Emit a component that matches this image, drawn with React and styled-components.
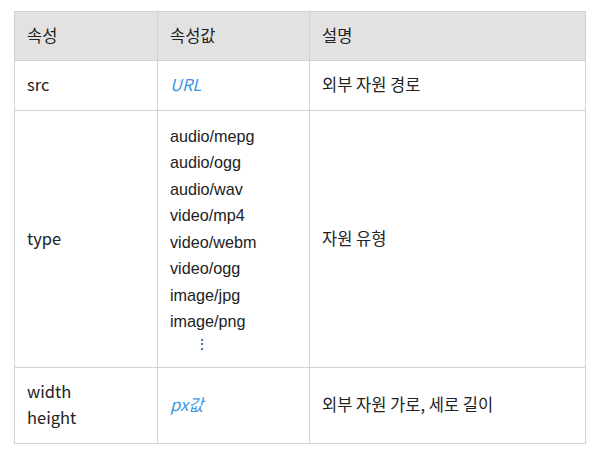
import React from "react";
import styled, { createGlobalStyle } from "styled-components";

const GlobalStyle = createGlobalStyle`
  body {
    margin: 0;
    background: #ffffff;
    font-family: "Noto Sans CJK KR", "Noto Sans", sans-serif;
    color: #222222;
  }
`;

const Page = styled.div`
  padding: 11px 14px 0 14px;
`;

const Table = styled.table`
  width: 572px;
  border-collapse: collapse;
  table-layout: fixed;
  font-size: 16.5px;
`;

const HeadCell = styled.th`
  height: 45px;
  padding: 0 12px 3px;
  background: #e2e2e2;
  border: 1px solid #d2d2d2;
  text-align: left;
  font-weight: 400;
  color: #222;
  line-height: 24px;
`;

const Cell = styled.td`
  height: ${(p) => p.$h}px;
  padding: 0 12px 3px;
  border: 1px solid #d2d2d2;
  vertical-align: middle;
  line-height: 26px;
`;

const Value = styled.span`
  color: #3f95e2;
  font-style: italic;
`;

const TypeList = styled.ul`
  list-style: none;
  margin: 0;
  padding: 0;
  font-family: "Liberation Sans", Arial, sans-serif;
  font-size: 16.2px;
`;

const TypeItem = styled.li`
  line-height: 26.5px;
`;

const More = styled.li`
  line-height: 18px;
  padding-left: 26px;
  font-size: 12px;
`;

const types = [
  "audio/mepg",
  "audio/ogg",
  "audio/wav",
  "video/mp4",
  "video/webm",
  "video/ogg",
  "image/jpg",
  "image/png",
];

const App = () => {
  return (
    <Page>
      <GlobalStyle />
      <Table>
        <colgroup>
          <col style={{ width: 143 }} />
          <col style={{ width: 152 }} />
          <col />
        </colgroup>
        <thead>
          <tr>
            <HeadCell>속성</HeadCell>
            <HeadCell>속성값</HeadCell>
            <HeadCell>설명</HeadCell>
          </tr>
        </thead>
        <tbody>
          <tr>
            <Cell $h={46}>src</Cell>
            <Cell $h={46}>
              <Value>URL</Value>
            </Cell>
            <Cell $h={46}>외부 자원 경로</Cell>
          </tr>
          <tr>
            <Cell $h={253}>type</Cell>
            <Cell $h={253}>
              <TypeList>
                {types.map((t) => (
                  <TypeItem key={t}>{t}</TypeItem>
                ))}
                <More>⋮</More>
              </TypeList>
            </Cell>
            <Cell $h={253}>자원 유형</Cell>
          </tr>
          <tr>
            <Cell $h={72}>
              width
              <br />
              height
            </Cell>
            <Cell $h={72}>
              <Value>px값</Value>
            </Cell>
            <Cell $h={72}>외부 자원 가로, 세로 길이</Cell>
          </tr>
        </tbody>
      </Table>
    </Page>
  );
};

export default App;
